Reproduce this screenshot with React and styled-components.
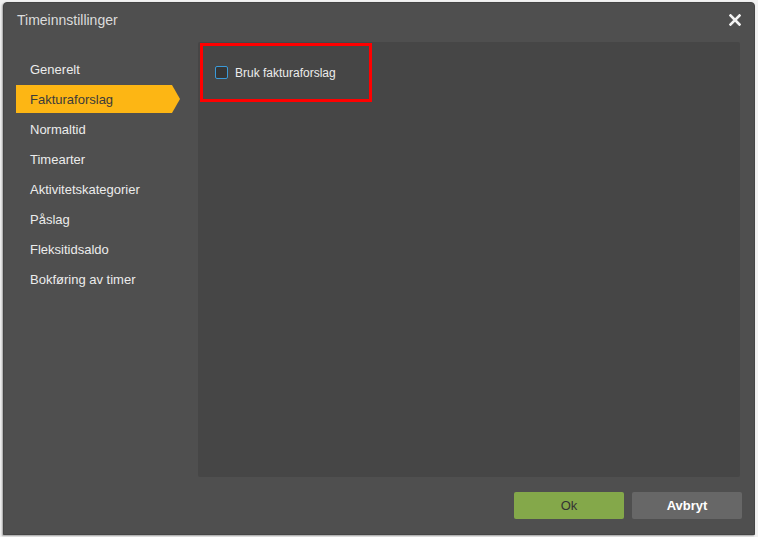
import styled, { createGlobalStyle } from 'styled-components';

const GlobalStyle = createGlobalStyle`
  body {
    margin: 0;
    background: #f2f2f2;
    font-family: 'Liberation Sans', Arial, sans-serif;
  }
`;

const Page = styled.div`
  width: 758px;
  height: 537px;
  padding: 2px 3px 0 3px;
  box-sizing: border-box;
`;

const Dialog = styled.div`
  width: 752px;
  height: 533px;
  box-sizing: border-box;
  background: #4f4f4f;
  border: 1px solid #454545;
  border-radius: 4px 4px 0 0;
  box-shadow: -1px 1px 2px rgba(0, 0, 0, 0.35);
  display: flex;
  flex-direction: column;
`;

const Header = styled.div`
  height: 39px;
  box-sizing: border-box;
  display: flex;
  align-items: flex-start;
  justify-content: space-between;
  padding: 9px 13px 0 13px;
`;

const Title = styled.span`
  color: #dcdcdc;
  font-size: 14px;
  line-height: 16px;
`;

const Close = styled.button`
  border: 0;
  background: none;
  padding: 2px 0 0 0;
  display: flex;
  cursor: pointer;
`;

const Body = styled.div`
  flex: 1;
  display: flex;
  padding: 0 14px 0 12px;
`;

const Sidebar = styled.ul`
  list-style: none;
  margin: 0;
  padding: 11px 0 0 0;
  width: 182px;
  flex-shrink: 0;
`;

const MenuItem = styled.li`
  height: 28px;
  margin-top: 2px;
  width: ${p => (p.$active ? '164px' : '156px')};
  padding-left: 14px;
  box-sizing: border-box;
  display: flex;
  align-items: center;
  font-size: 13px;
  color: ${p => (p.$active ? '#3b3b3b' : '#ececec')};
  background: ${p => (p.$active ? '#fdb614' : 'transparent')};
  clip-path: ${p =>
    p.$active ? 'polygon(0 0, 156px 0, 164px 50%, 156px 100%, 0 100%)' : 'none'};
  cursor: pointer;
`;

const Panel = styled.div`
  flex: 1;
  background: #464646;
  border-radius: 2px;
  padding: 1px 2px;
`;

const Highlight = styled.div`
  width: 172px;
  height: 59px;
  box-sizing: border-box;
  border: 3px solid #ff0000;
  display: flex;
  align-items: center;
  padding: 0 0 0 12px;
`;

const CheckRow = styled.label`
  display: flex;
  align-items: center;
  gap: 7px;
  color: #ececec;
  font-size: 12px;
  cursor: pointer;
`;

const CheckBox = styled.span`
  width: 13px;
  height: 13px;
  box-sizing: border-box;
  border: 1px solid #3b9ad8;
  border-radius: 2px;
  background: #363636;
`;

const Footer = styled.div`
  height: 57px;
  display: flex;
  justify-content: flex-end;
  align-items: center;
  gap: 8px;
  padding: 0 12px 0 0;
`;

const Button = styled.button`
  width: 110px;
  height: 27px;
  border: 0;
  border-radius: 2px;
  font-family: inherit;
  font-size: 13px;
  cursor: pointer;
  background: ${p => (p.$primary ? '#84a84a' : '#676767')};
  color: ${p => (p.$primary ? '#333' : '#fff')};
  font-weight: ${p => (p.$primary ? 'normal' : 'bold')};
`;

const items = [
  'Generelt',
  'Fakturaforslag',
  'Normaltid',
  'Timearter',
  'Aktivitetskategorier',
  'Påslag',
  'Fleksitidsaldo',
  'Bokføring av timer',
];

const App = () => {
  return (
    <Page>
      <GlobalStyle />
      <Dialog>
        <Header>
          <Title>Timeinnstillinger</Title>
          <Close aria-label='Lukk'>
            <svg width='12' height='12' viewBox='0 0 12 12'>
              <path
                d='M1.5 1.5 L10.5 10.5 M10.5 1.5 L1.5 10.5'
                stroke='#f2f2f2'
                strokeWidth='2.6'
                strokeLinecap='square'
              />
            </svg>
          </Close>
        </Header>
        <Body>
          <Sidebar>
            {items.map(item => (
              <MenuItem key={item} $active={item === 'Fakturaforslag'}>
                {item}
              </MenuItem>
            ))}
          </Sidebar>
          <Panel>
            <Highlight>
              <CheckRow>
                <CheckBox />
                Bruk fakturaforslag
              </CheckRow>
            </Highlight>
          </Panel>
        </Body>
        <Footer>
          <Button $primary>Ok</Button>
          <Button>Avbryt</Button>
        </Footer>
      </Dialog>
    </Page>
  );
};

export default App;
